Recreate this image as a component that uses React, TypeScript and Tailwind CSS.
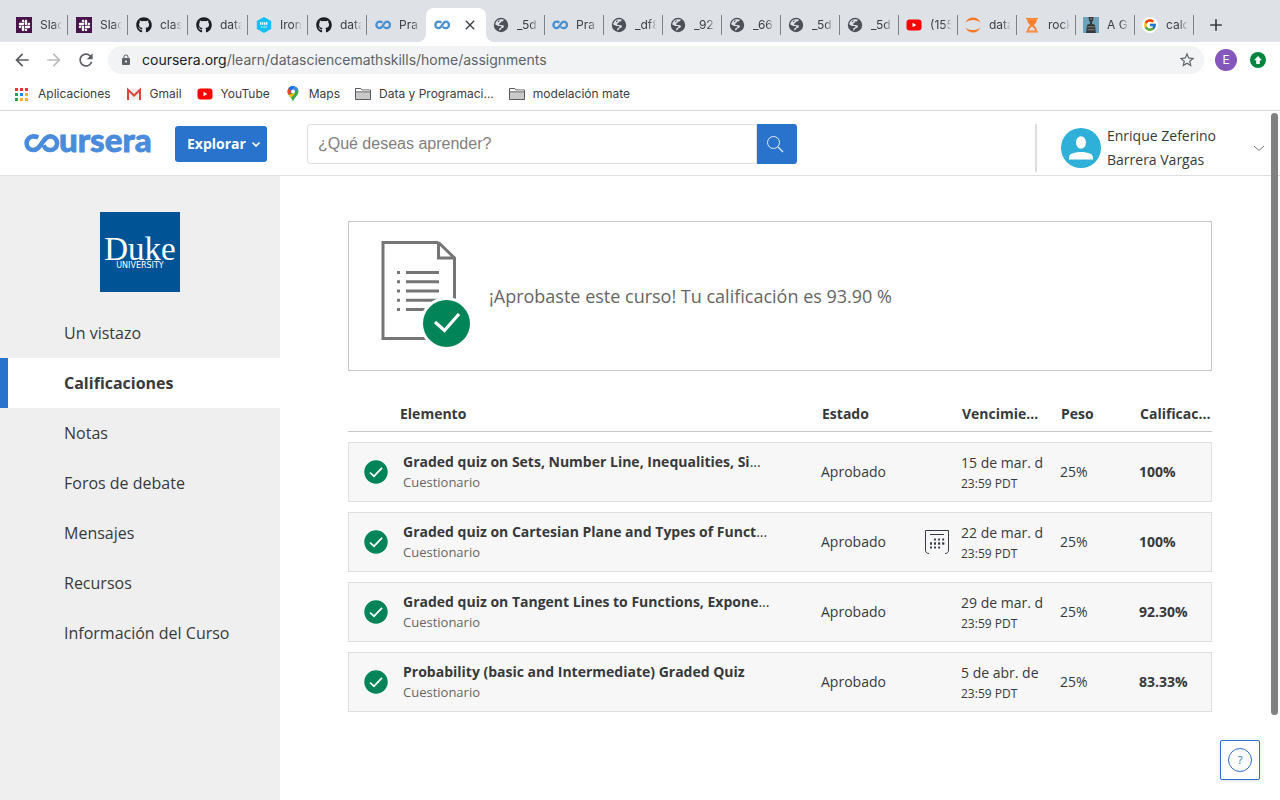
import type { ReactNode } from "react";
import { FaGithub, FaSlack } from "react-icons/fa";
import { FcGoogle } from "react-icons/fc";
import { MdArrowBack, MdArrowForward, MdClose, MdLock, MdRefresh, MdStarOutline, MdAdd } from "react-icons/md";

function SlackIcon() {
  return (
    <span className="flex size-4 items-center justify-center bg-[#4a154b] text-white">
      <FaSlack className="size-[13px]" />
    </span>
  );
}

function GithubIcon() {
  return <FaGithub className="size-4 text-[#1b1f23]" />;
}

function IronIcon() {
  return (
    <svg viewBox="0 0 16 16" className="size-4">
      <path d="M8 0l7.2 4v8L8 16 .8 12V4z" fill="#14bffb" />
      <path d="M4 6.5h8" stroke="#fff" strokeWidth="2.6" strokeDasharray="1.4 .6" />
      <path d="M5 10h6" stroke="#bdeeff" strokeWidth="1.6" strokeDasharray="1 .6" />
    </svg>
  );
}

function InfinityIcon() {
  return (
    <svg viewBox="0 0 16 16" className="size-4" fill="none" stroke="#4a90cf" strokeWidth="2.3">
      <path d="M7.4 5.7C6.6 5 5.6 4.6 4.7 4.6a3.3 3.3 0 0 0 0 6.6c3.300 0 4-6.600 7-6.600a3.200 3.200 0 0 1 0 6.600c-1.200 0-2.200-.6-3-1.600" />
    </svg>
  );
}

function GlobeIcon() {
  return (
    <svg viewBox="0 0 16 16" className="size-4">
      <circle cx="8" cy="8" r="7.200" fill="#4d5156" />
      <path
        d="M10.800 2.500C10.600 4.200 9.400 4.700 8.200 4.600 7.600 6 6.800 6.500 6 6.700c-.2 1 .6 1.300 2.200 1.300 2.200 0 3.400.9 2.400 2.200-.6.800-1.800.9-2.300 1.400-.4.500-.6 1.300-1.600 2.200-.6-.6-.5-1.600-.2-2.600l2.200-1.300c-.8-.9-2.200-.8-3.400-.8L2.300 7.600C2.400 4.800 4.600 2.400 7.400 2.200z"
        fill="#dee1e6"
      />
      <path d="M5.200 3.800l1.600-.6-.4 1.400-1.600.8z" fill="#4d5156" />
    </svg>
  );
}

function YoutubeIcon() {
  return (
    <svg viewBox="0 0 16 16" className="size-4">
      <rect x="0.500" y="2.500" width="15" height="11" rx="3" fill="#f00" />
      <path d="M6.500 5.700v4.600L10.300 8z" fill="#fff" />
    </svg>
  );
}

function JupyterIcon() {
  return (
    <svg viewBox="0 0 16 16" className="size-4" fill="#f37726">
      <path d="M.6 5.500C2 2.200 4.800.5 8 .5s6 1.700 7.400 5C13.600 3.700 11 2.900 8 2.900S2.400 3.700.6 5.500z" />
      <path d="M.6 10.500c1.400 3.300 4.200 5 7.400 5s6-1.700 7.400-5c-1.800 1.800-4.400 2.600-7.400 2.600s-5.600-.8-7.400-2.600z" />
    </svg>
  );
}

function HourglassIcon() {
  return (
    <svg viewBox="0 0 16 16" className="size-4" fill="#fb7f2d">
      <path d="M2 1h12v1.300H2zM2 14.200h12v1.300H2z" />
      <path d="M3.200 2.300h9.600c0 3-1.200 4.500-3.200 5.900 2 1.400 3.200 3 3.200 6H3.200c0-3 1.200-4.600 3.200-6-2-1.400-3.200-2.900-3.200-5.900z" />
      <path d="M5 13.400c.4-2 1.500-3 3-3.600 1.500.6 2.600 1.600 3 3.600z" fill="#dee1e6" />
    </svg>
  );
}

function StatueIcon() {
  return (
    <svg viewBox="0 0 16 16" className="size-4">
      <path d="M0 0h16v16H0z" fill="#6da3bd" />
      <path d="M5.500 0h5l-.5 4-1 1v1.500l3 1.500.8 8H3l1-8 3-1.500V5L6 3.500z" fill="#35393b" />
      <path d="M4.500 9h7v1.500h-7zM4.500 12h7v1.500h-7z" fill="#6b6a66" />
      <path d="M7 1.500h2v1H7z" fill="#99948a" />
    </svg>
  );
}

function GoogleIcon() {
  return (
    <span className="flex size-4 items-center justify-center rounded-full bg-white">
      <FcGoogle className="size-[14px]" />
    </span>
  );
}

function FolderIcon() {
  return (
    <svg viewBox="0 0 16 16" className="size-4" fill="#c9c9c9" stroke="#55575a">
      <path d="M.5 13.500v-11h5.300l1.200 1.500h8.500v9.500z" />
      <path d="M.5 5.800h15" />
      <path d="M1 3h4.500L6.700 4.500H15v.8H1z" fill="#fff" stroke="none" />
    </svg>
  );
}

function AppsIcon() {
  const colors = ["#f0323c", "#f0323c", "#f0323c", "#1fa463", "#2684fc", "#fbb03b", "#1fa463", "#fbb03b", "#fbb03b"];
  return (
    <svg viewBox="0 0 13 13" className="size-[13px]">
      {colors.map((color, i) => (
        <rect key={i} x={(i % 3) * 5} y={Math.floor(i / 3) * 5} width="3" height="3" fill={color} />
      ))}
    </svg>
  );
}

function GmailIcon() {
  return (
    <svg viewBox="0 0 16 16" className="size-4">
      <path d="M1.500 3h13v11h-13z" fill="#eee" />
      <path d="M2 14V3.800L8 9.500l6-5.700V14" fill="none" stroke="#db4437" strokeWidth="2" />
    </svg>
  );
}

function MapsIcon() {
  return (
    <svg viewBox="0 0 16 16" className="size-4">
      <path d="M8 0a5.500 5.500 0 0 1 5.500 5.500c0 4.200-4.600 5.800-5.500 10.500C7.100 11.300 2.500 9.700 2.500 5.500A5.500 5.500 0 0 1 8 0z" fill="#34a853" />
      <path d="M3.500 8.800L10.600 7 6.200 11.800C5.100 10.700 4.100 9.800 3.500 8.800z" fill="#fbbc04" />
      <path d="M3.800 2L8 5.500 3.500 8.800C2.300 7 2 4.200 3.800 2z" fill="#ea4335" />
      <path d="M3.800 2C5.500-.2 8-.2 9.800.4L6 5z" fill="#1a73e8" />
      <path d="M9.800.4c1.300.5 2.300 1.300 3 2.500L9.500 6.700 7 4z" fill="#4285f4" />
      <circle cx="8" cy="5.500" r="2" fill="#fff" />
    </svg>
  );
}

const tabs: { icon: ReactNode; label: string }[] = [
  { icon: <SlackIcon />, label: "Slac" },
  { icon: <SlackIcon />, label: "Slac" },
  { icon: <GithubIcon />, label: "clas" },
  { icon: <GithubIcon />, label: "data" },
  { icon: <IronIcon />, label: "Iron" },
  { icon: <GithubIcon />, label: "data" },
  { icon: <InfinityIcon />, label: "Pra" },
  { icon: <InfinityIcon />, label: "" },
  { icon: <GlobeIcon />, label: "_5d" },
  { icon: <InfinityIcon />, label: "Pra" },
  { icon: <GlobeIcon />, label: "_df8" },
  { icon: <GlobeIcon />, label: "_92" },
  { icon: <GlobeIcon />, label: "_66" },
  { icon: <GlobeIcon />, label: "_5d" },
  { icon: <GlobeIcon />, label: "_5d" },
  { icon: <YoutubeIcon />, label: "(155" },
  { icon: <JupyterIcon />, label: "data" },
  { icon: <HourglassIcon />, label: "rock" },
  { icon: <StatueIcon />, label: "A G" },
  { icon: <GoogleIcon />, label: "calc" },
];

const ACTIVE_TAB = 7;

const bookmarks: { icon: ReactNode; label: string }[] = [
  { icon: <GmailIcon />, label: "Gmail" },
  { icon: <YoutubeIcon />, label: "YouTube" },
  { icon: <MapsIcon />, label: "Maps" },
  { icon: <FolderIcon />, label: "Data y Programaci..." },
  { icon: <FolderIcon />, label: "modelación mate" },
];

function TabStrip() {
  return (
    <div className="flex h-[42px] items-end bg-[#dee1e6] pl-2">
      {tabs.map((tab, i) =>
        i === ACTIVE_TAB ? (
          <div key={i} className="relative flex h-[34px] w-[60px] items-center justify-between rounded-t-lg bg-white px-2">
            <svg viewBox="0 0 8 8" className="absolute bottom-0 -left-2 size-2" fill="#fff">
              <path d="M8 0v8H0a8 8 0 0 0 8-8z" />
            </svg>
            {tab.icon}
            <button aria-label="Cerrar pestaña" className="text-[#3c4043]">
              <MdClose className="size-4" />
            </button>
            <svg viewBox="0 0 8 8" className="absolute -right-2 bottom-0 size-2" fill="#fff">
              <path d="M0 0v8h8a8 8 0 0 1-8-8z" />
            </svg>
          </div>
        ) : (
          <div
            key={i}
            className={`flex h-[34px] items-center ${i < ACTIVE_TAB ? "pl-2" : "pl-[7px]"} ${i < 5 ? "w-[60px]" : "w-[59px]"}`}
          >
            <span className="shrink-0">{tab.icon}</span>
            <span className="ml-2 w-[22px] overflow-hidden mask-r-from-60% text-xs leading-5 whitespace-nowrap text-[#3c4043]">
              {tab.label}
            </span>
            {i !== ACTIVE_TAB - 1 && <span className="ml-auto h-5 w-px shrink-0 bg-[#808388]" />}
          </div>
        ),
      )}
      <button aria-label="Nueva pestaña" className="ml-3 flex h-[34px] items-center text-[#3c4043]">
        <MdAdd className="size-5" />
      </button>
    </div>
  );
}

function Browser() {
  return (
    <div className="border-b border-[#d9dadc] bg-white font-['Inter',sans-serif]">
      <TabStrip />
      <div className="flex h-9 items-center px-3">
        <button aria-label="Atrás" className="text-[#5a5d61]">
          <MdArrowBack className="size-5" />
        </button>
        <button aria-label="Adelante" className="ml-3 text-[#babcbe]">
          <MdArrowForward className="size-5" />
        </button>
        <button aria-label="Recargar" className="ml-3 text-[#5a5d61]">
          <MdRefresh className="size-5" />
        </button>
        <div className="ml-3 flex h-7 flex-1 items-center rounded-full bg-[#f1f3f4] px-3">
          <MdLock className="size-3 text-[#5f6368]" />
          <p className="ml-[10px] flex-1 text-sm text-[#5f6368]">
            <span className="text-[#202124]">coursera.org</span>/learn/datasciencemathskills/home/assignments
          </p>
          <button aria-label="Añadir a favoritos" className="-mr-1 text-[#5f6368]">
            <MdStarOutline className="size-[18px]" />
          </button>
        </div>
        <span className="ml-[11px] flex size-[22px] items-center justify-center rounded-full bg-[#8457bd] text-xs text-white">E</span>
        <button aria-label="Actualizar" className="mr-[2px] ml-[13px]">
          <svg viewBox="0 0 16 16" className="size-4">
            <circle cx="8" cy="8" r="8" fill="#00853f" />
            <path d="M8 4l4 4.300H9.800V12H6.200V8.300H4z" fill="#fff" />
          </svg>
        </button>
      </div>
      <nav className="flex h-8 items-center gap-[15px] pl-[15px] text-xs text-[#3c4043]">
        <a href="#aplicaciones" className="flex items-center gap-[10px]">
          <AppsIcon />
          Aplicaciones
        </a>
        {bookmarks.map((b) => (
          <a key={b.label} href="#marcador" className="flex items-center gap-2">
            {b.icon}
            {b.label}
          </a>
        ))}
      </nav>
    </div>
  );
}

function CourseraLogo() {
  return (
    <a href="#inicio" className="flex h-10 items-center text-[#4a8cdb]">
      <svg width="128" height="34" viewBox="0 0 128 34" aria-label="coursera">
        <path
          d="M14.300 10.600C12.800 9.800 11.200 9.400 9.400 9.400a6.800 6.800 0 0 0 0 13.600C17.500 23 18.500 9.400 26.300 9.400a6.800 6.800 0 0 1 0 13.600c-3.200 0-5.600-2-6.600-4.800"
          fill="none"
          stroke="currentColor"
          strokeWidth="4.600"
        />
        <text x="35" y="25" fill="currentColor" stroke="currentColor" strokeWidth="0.800" className="font-['Lato',sans-serif] text-[33px] font-black">
          ursera
        </text>
      </svg>
    </a>
  );
}

function SiteHeader() {
  return (
    <header className="flex h-[65px] items-center border-b border-[#dedede] bg-white pt-0.5 pr-[15px] pl-6">
      <CourseraLogo />
      <button className="ml-[23px] flex h-9 items-center gap-1 rounded-[3px] bg-[#2a73cc] pr-[5px] pl-3 text-sm font-bold text-white">
        Explorar
        <svg viewBox="0 0 12 12" className="size-3" fill="none" stroke="currentColor" strokeWidth="1.700">
          <path d="M2.500 4.500L6 8l3.500-3.500" />
        </svg>
      </button>
      <form className="ml-10 flex h-10 w-[490px]">
        <input
          aria-label="¿Qué deseas aprender?"
          placeholder="¿Qué deseas aprender?"
          className="min-w-0 flex-1 rounded-l-[3px] border border-[#dedede] px-[10px] font-['Liberation_Sans',sans-serif] text-base placeholder:text-[#808080]"
        />
        <button type="button" aria-label="Buscar" className="flex w-10 items-center justify-center rounded-r-[3px] bg-[#2a73cc]">
          <svg viewBox="0 0 18 18" className="mr-1 size-[18px]" fill="none" stroke="#e3edf8">
            <circle cx="7.500" cy="7.500" r="6" />
            <path d="M12 12l5 5" strokeWidth="1.300" />
          </svg>
        </button>
      </form>
      <button className="mb-[3px] ml-auto flex h-12 items-center self-end border-l-2 border-[#dedede] pl-6 text-left">
        <svg viewBox="0 0 40 40" className="size-10">
          <circle cx="20" cy="20" r="20" fill="#2fb0d8" />
          <ellipse cx="20" cy="14.500" rx="5" ry="6.200" fill="#fff" />
          <path d="M8 31.500c0-3 .4-5 2.600-5.800C13.500 24.500 16.500 24 20 24s6.500.5 9.400 1.700c2.200.8 2.600 2.800 2.600 5.800z" fill="#fff" />
        </svg>
        <span className="ml-[6px] w-[140px] text-sm leading-6 text-[#373a3c]">
          Enrique Zeferino
          <br />
          Barrera Vargas
        </span>
        <svg viewBox="0 0 12 12" className="ml-[6px] size-3" fill="none" stroke="#757575">
          <path d="M1 4l5 4.500L11 4" />
        </svg>
      </button>
    </header>
  );
}

const navItems = ["Un vistazo", "Calificaciones", "Notas", "Foros de debate", "Mensajes", "Recursos", "Información del Curso"];

function Sidebar() {
  return (
    <aside className="w-[280px] shrink-0 bg-[#efefef] pt-9">
      <div className="mx-auto mb-4 flex size-20 flex-col items-center justify-center bg-[#005496] pt-1 text-white">
        <span className="font-['Liberation_Serif',serif] text-[33px] leading-6">Duke</span>
        <span className="font-['DejaVu_Sans',sans-serif] text-[8px] leading-[10px]">UNIVERSITY</span>
      </div>
      <nav>
        {navItems.map((item) => (
          <a
            key={item}
            href="#seccion"
            className={
              item === "Calificaciones"
                ? "flex h-[50px] items-center border-l-8 border-[#2a73cc] bg-white pl-14 font-bold text-[#373a3c]"
                : "flex h-[50px] items-center pl-16 text-[#373a3c]"
            }
          >
            {item}
          </a>
        ))}
      </nav>
    </aside>
  );
}

function CheckBadge() {
  return (
    <svg viewBox="0 0 24 24" className="size-6" fill="none">
      <circle cx="12" cy="12" r="11.700" fill="#018458" />
      <path d="M6 12.500l4 3.700 8-8.400" stroke="#fff" strokeWidth="1.700" />
    </svg>
  );
}

function PassedIllustration() {
  return (
    <svg viewBox="0 0 90 108" className="h-[108px] w-[90px]" fill="none" stroke="#757575" strokeWidth="3">
      <path d="M57.500 2.500H2v96h60M57.500 2.500L73.500 18v50M57.500 2.500V18h16" />
      <path d="M25 32.500h33M25 41.700h33M25 51h33M25 60.200h33M25 69.500h33" />
      <path d="M17.500 31v41" strokeDasharray="3 6.250" />
      <circle cx="65.500" cy="83.500" r="26.500" fill="#fff" stroke="none" />
      <circle cx="65.500" cy="83.500" r="23.500" fill="#018458" stroke="none" />
      <path d="M54 82l9.500 8.500L78 74" stroke="#fff" strokeWidth="3.200" />
    </svg>
  );
}

function CalendarIcon() {
  return (
    <svg viewBox="0 0 24 24" className="ml-auto size-6" fill="none" stroke="#373a4c">
      <path d="M4 23.500C2 23.500.5 22.500.5 20V.5h23V20c0 2.500-1.500 3.500-3.500 3.500M5 4.500h14" />
      <path d="M9 9.500h11M5 13.500h15M5 17.500h11" strokeWidth="1.900" strokeDasharray="1.900 2.200" />
      <path d="M5 13.500h15" strokeWidth="1.900" strokeDasharray="1.900 2.200" />
    </svg>
  );
}

const rows = [
  { title: "Graded quiz on Sets, Number Line, Inequalities, Si", cut: true, date: "15 de mar. d", grade: "100%", adjusted: false },
  { title: "Graded quiz on Cartesian Plane and Types of Funct", cut: true, date: "22 de mar. d", grade: "100%", adjusted: true },
  { title: "Graded quiz on Tangent Lines to Functions, Expone", cut: true, date: "29 de mar. d", grade: "92.30%", adjusted: false },
  { title: "Probability (basic and Intermediate) Graded Quiz", cut: false, date: "5 de abr. de", grade: "83.33%", adjusted: false },
];

function GradesTable() {
  return (
    <table className="mt-4 w-full table-fixed border-separate border-spacing-x-0 border-spacing-y-[10px] text-left text-sm text-[#373a3c]">
      <colgroup>
        <col className="w-[52px]" />
        <col />
        <col className="w-[92px]" />
        <col className="w-12" />
        <col className="w-[99px]" />
        <col className="w-[79px]" />
        <col className="w-[73px]" />
      </colgroup>
      <thead>
        <tr className="h-[35px] whitespace-nowrap *:border-b *:border-[#c7c7c7] *:font-bold">
          <td />
          <th scope="col">Elemento</th>
          <th scope="col" className="pl-px">Estado</th>
          <td />
          <th scope="col" className="pl-px">Vencimie...</th>
          <th scope="col" className="pl-px">Peso</th>
          <th scope="col" className="pl-px">Calificac...</th>
        </tr>
      </thead>
      <tbody>
        {rows.map((row) => (
          <tr key={row.title} className="h-[60px] whitespace-nowrap *:border-y *:border-[#dedede] *:bg-[#f7f7f7]">
            <td className="border-l">
              <span className="flex pl-[15px]">
                <CheckBadge />
              </span>
            </td>
            <td className="pl-[3px] leading-5">
              <a href="#cuestionario" className="block">
                <span className="font-bold">{row.title}</span>
                {row.cut && "..."}
              </a>
              <span className="block text-[13px] text-[#666]">Cuestionario</span>
            </td>
            <td>Aprobado</td>
            <td className="pr-3 align-middle">{row.adjusted && <CalendarIcon />}</td>
            <td className="pt-0.5">
              <span className="block leading-[21px]">{row.date}</span>
              <span className="block text-xs leading-[21px]">23:59 PDT</span>
            </td>
            <td>25%</td>
            <td className="border-r font-bold">{row.grade}</td>
          </tr>
        ))}
      </tbody>
    </table>
  );
}

export default function App() {
  return (
    <div className="relative flex min-h-screen flex-col bg-white font-['Open_Sans',sans-serif]">
      <Browser />
      <SiteHeader />
      <div className="flex flex-1">
        <Sidebar />
        <main className="min-w-0 flex-1 px-[68px] pt-[45px]">
          <section className="flex h-[150px] items-center border border-[#c7c7c7] pl-8">
            <div className="pb-1">
              <PassedIllustration />
            </div>
            <p className="ml-[18px] text-lg text-[#666]">¡Aprobaste este curso! Tu calificación es 93.90 %</p>
          </section>
          <GradesTable />
        </main>
      </div>
      <div className="absolute top-[113px] right-[2px] h-[602px] w-[7px] rounded-full bg-[#808080]" />
      <button
        aria-label="Ayuda"
        className="absolute right-5 bottom-5 flex size-10 items-center justify-center rounded-[2px] border border-[#2a73cc] bg-white shadow"
      >
        <span className="flex size-6 items-center justify-center rounded-full border border-[#2a73cc] text-[11px] text-[#2a73cc]">?</span>
      </button>
    </div>
  );
}
